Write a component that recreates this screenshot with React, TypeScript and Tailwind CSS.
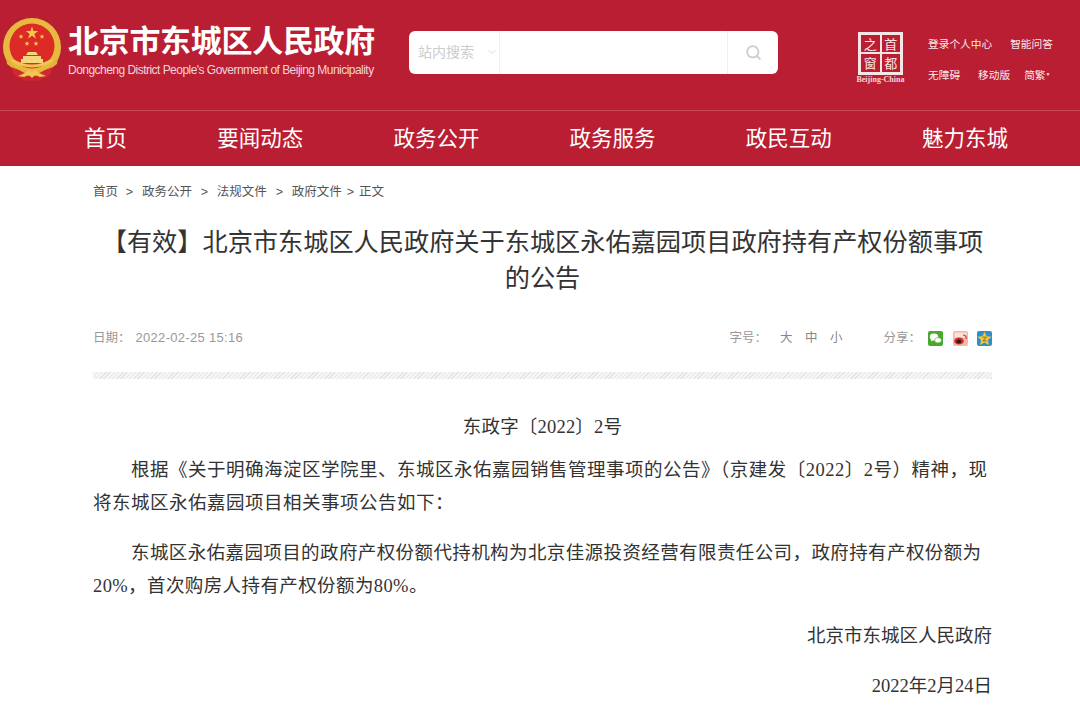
import React from "react";
import { Search, ChevronDown } from "lucide-react";

const sans = "font-['Liberation_Sans','Noto_Sans_CJK_SC',sans-serif]";
const navItems = ["首页", "要闻动态", "政务公开", "政务服务", "政民互动", "魅力东城"];

// coordinates are page pixels minus the 17px top offset
function Emblem() {
  return (
    <svg viewBox="0 0 64 64" className="w-[64px] h-[64px] shrink-0 self-start mt-[17px]">
      <path d="M10 46l3 11 12 7h14l12-7 3-11z" fill="#c8242c" />
      <circle cx="32" cy="30" r="29" fill="#e8b93f" />
      <circle cx="32" cy="29" r="22.5" fill="#dc2a26" />
      <polygon points="32,9.5 33.5,14 38.2,14 34.4,16.9 35.9,21.5 32,18.7 28.1,21.5 29.6,16.9 25.8,14 30.5,14" fill="#f3c94c" />
      <polygon points="21,17 21.6,18.8 23.5,18.8 22,20 22.6,21.8 21,20.7 19.4,21.8 20,20 18.5,18.8 20.4,18.8" fill="#f3c94c" />
      <polygon points="27,24 27.6,25.8 29.5,25.8 28,27 28.6,28.8 27,27.7 25.4,28.8 26,27 24.5,25.8 26.4,25.8" fill="#f3c94c" />
      <polygon points="36,24 36.6,25.8 38.5,25.8 37,27 37.6,28.8 36,27.7 34.4,28.8 35,27 33.5,25.8 35.4,25.8" fill="#f3c94c" />
      <polygon points="42,17 42.6,18.8 44.5,18.8 43,20 43.6,21.8 42,20.7 40.4,21.8 41,20 39.5,18.8 41.4,18.8" fill="#f3c94c" />
      <path d="M26 38l2-3h8l2 3zM23 39h18v3H23zM21 42h22v4H21z" fill="#f5d67a" />
      <path d="M12 43c6 4 13 6 20 6s14-2 20-6" fill="none" stroke="#f0c654" strokeWidth="3" />
      <path d="M6 39c4 9 12 16 26 16s22-7 26-16l-1 8-12 9-13 3-13-3-12-9z" fill="#e3ae37" />
      <path d="M11 50l5 10 9 2 3-4-9-5zM53 50l-5 10-9 2-3-4 9-5z" fill="#cf2a2e" />
      <path d="M18 59l7-3 4-3 3 2 3-2 4 3 7 3-6 1-5-2-3 3-3-3-5 2z" fill="#f0c654" />
    </svg>
  );
}

function BeijingSeal() {
  return (
    <div className="w-[49px] flex flex-col items-center shrink-0 mt-[5px]">
      <div className="w-[45px] h-[43px] border-[3px] border-[#f8e6e6] grid grid-cols-2 grid-rows-2 gap-[2px] bg-[#f8e6e6] font-['Noto_Sans_CJK_SC',sans-serif] text-[13px] leading-none">
        {["之", "首", "窗", "都"].map((c) => (
          <span key={c} className="bg-[#b91e32] text-[#f8e6e6] flex items-center justify-center overflow-hidden">{c}</span>
        ))}
      </div>
      <span className="text-[8px] leading-[8px] mt-[1px] text-[#f3d5d8] font-['Liberation_Serif',serif] font-bold whitespace-nowrap">Beijing-China</span>
    </div>
  );
}

function ShareIcons() {
  return (
    <div className="flex gap-[9.5px]">
      <svg viewBox="0 0 15 15" className="w-[15px] h-[15px]">
        <rect width="15" height="15" rx="2" fill="#4aa82f" />
        <ellipse cx="6" cy="6" rx="4.2" ry="3.4" fill="#fff" />
        <path d="M3.5 8.5l-.6 2 2.4-1.2z" fill="#fff" />
        <ellipse cx="10" cy="9.3" rx="3.4" ry="2.7" fill="#fff" stroke="#4aa82f" strokeWidth=".6" />
      </svg>
      <svg viewBox="0 0 15 15" className="w-[15px] h-[15px]">
        <rect width="15" height="15" rx="2" fill="#f5b8a4" />
        <rect x="1.5" y="1.5" width="12" height="5" rx="1" fill="#fae2da" />
        <ellipse cx="6" cy="10" rx="4.8" ry="3.6" fill="#e0262c" />
        <ellipse cx="5.8" cy="10.5" rx="2.5" ry="1.9" fill="#222" />
        <path d="M10 4c2.4 0 3.7 1.8 3 4" fill="none" stroke="#e0262c" strokeWidth="1.1" />
      </svg>
      <svg viewBox="0 0 15 15" className="w-[15px] h-[15px]">
        <rect width="15" height="15" rx="2" fill="#2f8ed0" />
        <polygon points="7.5,.8 9.6,5.2 14.6,5.8 10.9,9.1 11.9,14 7.5,11.6 3.1,14 4.1,9.1 .4,5.8 5.4,5.2" fill="#f5c733" />
        <path d="M5.6 6.2h3.8L6 9.8h3.6" fill="none" stroke="#7a6a20" strokeWidth=".9" />
      </svg>
    </div>
  );
}

export default function App() {
  return (
    <div className={`h-[709px] overflow-hidden bg-white ${sans}`}>
      <header className="bg-[#b91e32] text-white">
        <div className="h-[111px] flex items-center border-b border-[#c9485a]">
          <Emblem />
          <div className="ml-[4px] w-[320px] mt-[-9px]">
            <div className="text-[31px] leading-[38px] font-bold tracking-[-0.3px] whitespace-nowrap">北京市东城区人民政府</div>
            <div className="text-[12px] leading-[16px] mt-[1px] text-[#f3d5d8] tracking-[-0.53px] whitespace-nowrap">Dongcheng District People's Government of Beijing Municipality</div>
          </div>
          <div className="ml-[21px] w-[369px] h-[43px] mt-[-6px] bg-white rounded-[6px] flex items-center text-[#cccccc]">
            <div className="w-[91px] h-full flex items-center pl-[9px] border-r border-[#f0f0f0] text-[14px]">
              <span>站内搜索</span>
              <ChevronDown className="w-[12px] h-[12px] ml-[12px]" strokeWidth={1.5} />
            </div>
            <div className="flex-1" />
            <div className="w-[51px] h-full flex items-center justify-center border-l border-[#f0f0f0]">
              <Search className="w-[17px] h-[17px]" strokeWidth={2.5} />
            </div>
          </div>
          <div className="ml-[78px]"><BeijingSeal /></div>
          <div className="ml-[23px] flex flex-col gap-[19px] text-[10.7px] leading-[12px] mt-[8px] text-[#fbeaec] whitespace-nowrap">
            <div className="flex gap-[18px]"><span>登录个人中心</span><span>智能问答</span></div>
            <div className="flex gap-[18px]"><span>无障碍</span><span>移动版</span><span className="ml-[-4px]">简繁<sup className="text-[5px]">▼</sup></span></div>
          </div>
        </div>
        <nav className="h-[55px] pt-[2px] flex items-center justify-between pl-[84px] pr-[72px] text-[21.5px]">
          {navItems.map((n) => <span key={n}>{n}</span>)}
        </nav>
      </header>

      <main className="pl-[93px] w-[992px]">
        <div className="h-[52px] flex items-center gap-[8.8px] text-[12.5px] text-[#555]">
          <span>首页</span><span className="ml-[-1px]">&gt;</span><span>政务公开</span><span>&gt;</span><span>法规文件</span><span>&gt;</span><span>政府文件</span><span className="mx-[-3.8px]">&gt;</span><span>正文</span>
        </div>
        <h1 className="mt-[6px] text-[25.2px] leading-[36px] text-center text-[#333]">【有效】北京市东城区人民政府关于东城区永佑嘉园项目政府持有产权份额事项<br />的公告</h1>
        <div className="mt-[30px] h-[24px] flex items-center justify-between text-[12.5px] text-[#999]">
          <div>日期：<span className="ml-[5px] text-[13px] tracking-[0.3px]">2022-02-25 15:16</span></div>
          <div className="flex items-center">
            <span>字号：</span>
            <div className="ml-[13px] flex gap-[12.5px] text-[#888]"><span>大</span><span>中</span><span>小</span></div>
            <span className="ml-[41px] mr-[7px]">分享：</span>
            <ShareIcons />
          </div>
        </div>
        <div className="mt-[22px] h-[7px] bg-[repeating-linear-gradient(135deg,#e4e4e4_0,#e4e4e4_1px,#f6f6f6_1px,#f6f6f6_3px)]" />
        <article className="font-['Liberation_Serif','Noto_Sans_CJK_SC',serif] text-[18.5px] leading-[33px] text-[#333]">
          <p className="mt-[32px] text-center tracking-[0.2px]">东政字〔2022〕2号</p>
          <p className="mt-[10px] indent-[38px] tracking-[0.5px]">根据《关于明确海淀区学院里、东城区永佑嘉园销售管理事项的公告》（京建发〔2022〕2号）精神，现将东城区永佑嘉园项目相关事项公告如下：</p>
          <p className="mt-[17px] indent-[38px] tracking-[0.4px]">东城区永佑嘉园项目的政府产权份额代持机构为北京佳源投资经营有限责任公司，政府持有产权份额为20%，首次购房人持有产权份额为80%。</p>
          <p className="mt-[17px] text-right">北京市东城区人民政府</p>
          <p className="mt-[17px] text-right">2022年2月24日</p>
        </article>
      </main>
    </div>
  );
}
